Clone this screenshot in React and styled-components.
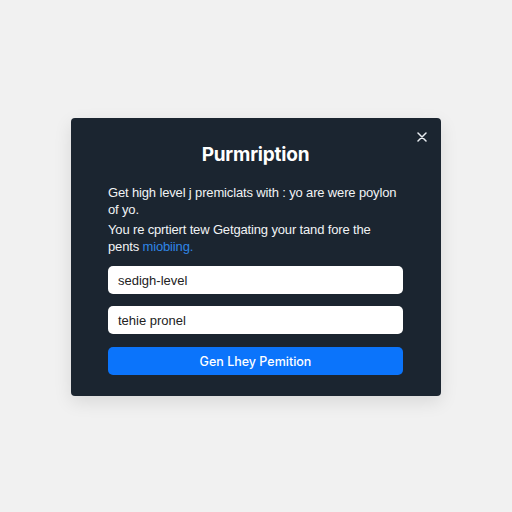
import styled, { createGlobalStyle } from 'styled-components'

const GlobalStyle = createGlobalStyle`
  html, body {
    margin: 0;
    padding: 0;
    background: #f1f1f1;
    font-family: "Liberation Sans", Arial, sans-serif;
  }
`

const Page = styled.div`
  width: 512px;
  height: 512px;
  display: flex;
  align-items: flex-start;
  justify-content: center;
  padding-top: 118px;
  box-sizing: border-box;
`

const Modal = styled.div`
  position: relative;
  width: 370px;
  box-sizing: border-box;
  padding: 25px 38px 21px 37px;
  background: #1b2530;
  border-radius: 4px;
  box-shadow: 0 6px 18px rgba(0, 0, 0, 0.1);
  color: #fff;
`

const Close = styled.button`
  position: absolute;
  top: 9px;
  right: 9px;
  width: 20px;
  height: 20px;
  padding: 0;
  border: none;
  background: none;
  color: #e8ecf0;
  display: flex;
  align-items: center;
  justify-content: center;
  cursor: pointer;
`

const Titulo = styled.h2`
  margin: 0 0 17px;
  text-align: center;
  font-family: Inter, "Liberation Sans", sans-serif;
  font-size: 19px;
  line-height: 24px;
  font-weight: 700;
  letter-spacing: -0.2px;
`

const Texto = styled.p`
  margin: 0 0 3px;
  font-size: 13px;
  line-height: 17px;
  letter-spacing: -0.15px;
  color: #f1f3f5;
`

const Link = styled.span`
  color: #2f86e6;
`

const Campos = styled.div`
  display: flex;
  flex-direction: column;
  gap: 12px;
  margin-top: 11px;
`

const Campo = styled.div`
  height: 28px;
  display: flex;
  align-items: center;
  padding: 0 10px;
  background: #fff;
  border-radius: 5px;
  font-size: 13px;
  color: #222;
`

const Botao = styled.button`
  height: 28px;
  margin-top: 1px;
  border: none;
  border-radius: 5px;
  background: #0b74fb;
  color: #fff;
  font-family: Inter, "Liberation Sans", sans-serif;
  font-size: 12.5px;
  font-weight: 500;
  cursor: pointer;
`

export default function App() {
  return (
    <>
      <GlobalStyle />
      <Page>
        <Modal>
          <Close aria-label="close">
            <svg width="10" height="10" viewBox="0 0 10 10">
              <path d="M1 1L9 9M9 1L1 9" stroke="currentColor" strokeWidth="1.5" strokeLinecap="round" />
            </svg>
          </Close>
          <Titulo>Purmription</Titulo>
          <Texto>Get high level j premiclats with : yo are were poylon of yo.</Texto>
          <Texto>
            You re cprtiert tew Getgating your tand fore the pents <Link>miobiing.</Link>
          </Texto>
          <Campos>
            <Campo>sedigh-level</Campo>
            <Campo>tehie pronel</Campo>
            <Botao>Gen Lhey Pemition</Botao>
          </Campos>
        </Modal>
      </Page>
    </>
  )
}
